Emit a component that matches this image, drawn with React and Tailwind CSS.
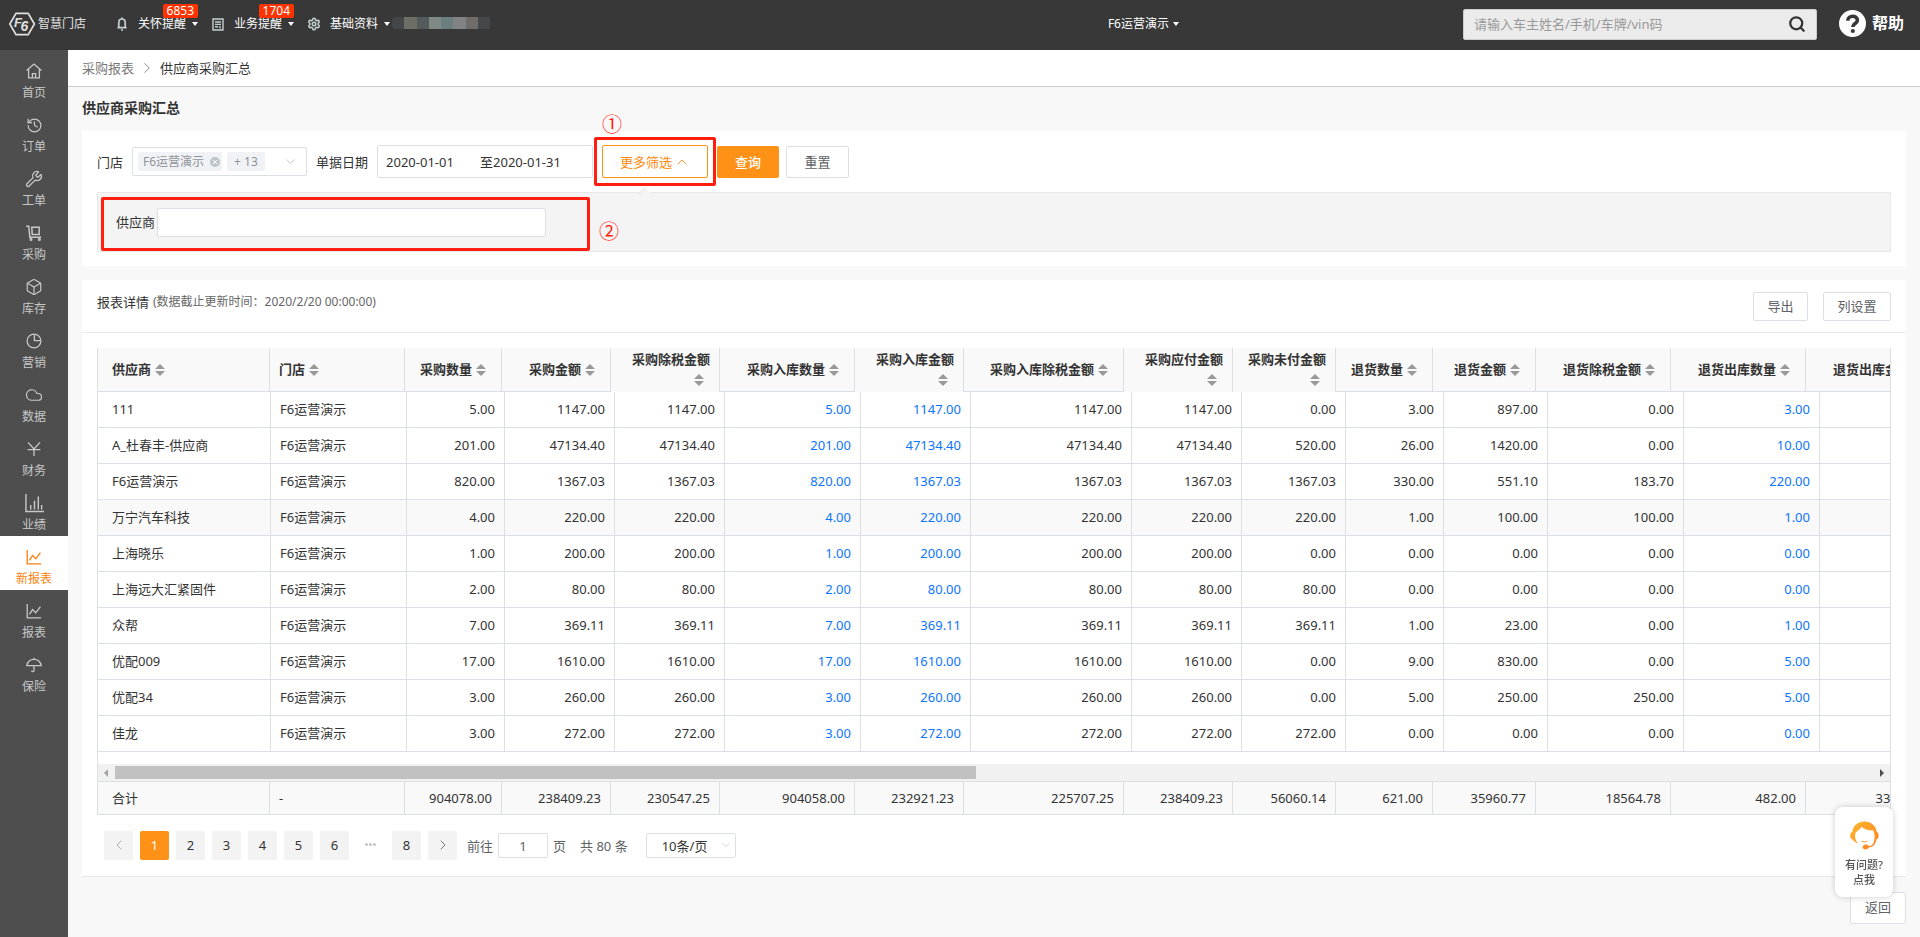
import React, { useState } from "react";
import { Box, ChevronDown, ChevronLeft, ChevronRight, ChevronUp, Cloud, History, Search, Settings, Wrench } from "lucide-react";

const FONT = "font-['Noto_Sans','Noto_Sans_CJK_SC',sans-serif]";

const Svg = ({ children, size = 16 }) => (
  <svg
    width={size}
    height={size}
    viewBox="0 0 16 16"
    fill="none"
    stroke="currentColor"
    strokeWidth="1.3"
    aria-hidden="true"
  >
    {children}
  </svg>
);

const HomeIcon = () => (
  <Svg>
    <path d="M0.6 7.6 8 1l7.4 6.6M2.6 6.4v8.4h10.8V6.4" />
    <path d="M6.4 14.8v-4.2h3.2v4.2" />
  </Svg>
);
const CartIcon = () => (
  <Svg>
    <path d="M0.2 1.2h2.6l1 11h11.4M5.8 2.2h7.4v7.2H6.2z" strokeWidth="1.5" />
    <circle cx="5" cy="14.4" r="0.9" />
    <circle cx="13.4" cy="14.4" r="0.9" />
  </Svg>
);
const PieIcon = () => (
  <Svg>
    <circle cx="8" cy="8" r="6.9" />
    <path d="M8.4 1.4v6.2h6.2" />
  </Svg>
);
const YuanIcon = () => (
  <Svg>
    <path d="M2 1.4 8 8l6-6.6M8 8v7M1.6 8.6h12.8" />
  </Svg>
);
const BarsIcon = () => (
  <Svg size={19}>
    <path d="M0.8 0v14.8H16M4.8 13V9.2M8 13V5.6M11.2 13V2M14 13V9.2" strokeWidth="1.2" />
  </Svg>
);
const ChartIcon = () => (
  <Svg>
    <path d="M1.2 1v13.8H15M3.4 11.4 6.6 6.6l3.2 3.2 4.6-6.2" />
  </Svg>
);
const UmbrellaIcon = () => (
  <Svg>
    <path d="M0.8 8.6C1.6 4.6 4.4 2.4 8 2.4s6.4 2.2 7.2 6.2zM8 0.8v1.6M8 8.6v4.8c0 1.6-2.2 1.6-2.4 0.2" />
  </Svg>
);

const menu = [
  { label: "首页", icon: <HomeIcon /> },
  { label: "订单", icon: <History size={17} strokeWidth={1.7} /> },
  { label: "工单", icon: <Wrench size={18} strokeWidth={1.7} /> },
  { label: "采购", icon: <CartIcon /> },
  { label: "库存", icon: <Box size={18} strokeWidth={1.6} /> },
  { label: "营销", icon: <PieIcon /> },
  { label: "数据", icon: <Cloud size={18} strokeWidth={1.6} /> },
  { label: "财务", icon: <YuanIcon /> },
  { label: "业绩", icon: <BarsIcon /> },
  { label: "新报表", icon: <ChartIcon />, active: true },
  { label: "报表", icon: <ChartIcon /> },
  { label: "保险", icon: <UmbrellaIcon /> },
];

// wrap: the title does not fit beside its sort arrows
const columns = [
  { title: "供应商", width: 172 },
  { title: "门店", width: 135 },
  { title: "采购数量", width: 97 },
  { title: "采购金额", width: 109 },
  { title: "采购除税金额", width: 109, wrap: true },
  { title: "采购入库数量", width: 135, link: true },
  { title: "采购入库金额", width: 109, wrap: true, link: true },
  { title: "采购入库除税金额", width: 160 },
  { title: "采购应付金额", width: 109, wrap: true },
  { title: "采购未付金额", width: 103, wrap: true },
  { title: "退货数量", width: 97 },
  { title: "退货金额", width: 103 },
  { title: "退货除税金额", width: 135 },
  { title: "退货出库数量", width: 135, link: true },
  { title: "退货出库金额", width: 135, link: true },
];

const store = "F6运营演示";
const rows = [
  ["111", store, "5.00", "1147.00", "1147.00", "5.00", "1147.00", "1147.00", "1147.00", "0.00", "3.00", "897.00", "0.00", "3.00", ""],
  ["A_杜春丰-供应商", store, "201.00", "47134.40", "47134.40", "201.00", "47134.40", "47134.40", "47134.40", "520.00", "26.00", "1420.00", "0.00", "10.00", ""],
  ["F6运营演示", store, "820.00", "1367.03", "1367.03", "820.00", "1367.03", "1367.03", "1367.03", "1367.03", "330.00", "551.10", "183.70", "220.00", ""],
  ["万宁汽车科技", store, "4.00", "220.00", "220.00", "4.00", "220.00", "220.00", "220.00", "220.00", "1.00", "100.00", "100.00", "1.00", ""],
  ["上海晓乐", store, "1.00", "200.00", "200.00", "1.00", "200.00", "200.00", "200.00", "0.00", "0.00", "0.00", "0.00", "0.00", ""],
  ["上海远大汇紧固件", store, "2.00", "80.00", "80.00", "2.00", "80.00", "80.00", "80.00", "80.00", "0.00", "0.00", "0.00", "0.00", ""],
  ["众帮", store, "7.00", "369.11", "369.11", "7.00", "369.11", "369.11", "369.11", "369.11", "1.00", "23.00", "0.00", "1.00", ""],
  ["优配009", store, "17.00", "1610.00", "1610.00", "17.00", "1610.00", "1610.00", "1610.00", "0.00", "9.00", "830.00", "0.00", "5.00", ""],
  ["优配34", store, "3.00", "260.00", "260.00", "3.00", "260.00", "260.00", "260.00", "0.00", "5.00", "250.00", "250.00", "5.00", ""],
  ["佳龙", store, "3.00", "272.00", "272.00", "3.00", "272.00", "272.00", "272.00", "272.00", "0.00", "0.00", "0.00", "0.00", ""],
];
const totals = ["合计", "-", "904078.00", "238409.23", "230547.25", "904058.00", "232921.23", "225707.25", "238409.23", "56060.14", "621.00", "35960.77", "18564.78", "482.00", "33000.00"];

const Caret = () => (
  <span className="h-0 w-0 border-x-[3px] border-t-4 border-x-transparent border-t-current" />
);

const TopMenu = ({ icon, label, badge }) => (
  <button type="button" className="relative flex items-center text-[12px] leading-4">
    <span className="mr-2 flex w-4 justify-center text-[#c4d0d0]">{icon}</span>
    <span>{label}</span>
    <span className="ml-1.5 flex">
      <Caret />
    </span>
    {badge && (
      <span className="absolute -top-3 right-0 rounded-xs bg-[#ff3300] px-1 text-[12px] leading-3.5">
        {badge}
      </span>
    )}
  </button>
);

const TopBar = () => (
  <header className="flex h-[50px] items-center bg-[#383838] pb-3 pr-4 pl-2 text-white">
    <a href="#home" className="mt-2.5 flex items-center text-[#e0e0e0]">
      <svg width="28" height="24" viewBox="0 0 28 24" fill="none" stroke="currentColor" aria-hidden="true">
        <path d="M8 1.4h12.2L26.4 12l-6.2 10.6H8L1.8 12z" strokeWidth="1.7" />
        <g fontStyle="italic" fontWeight="700" fontFamily="Liberation Sans, sans-serif" fill="currentColor" stroke="none">
          <text x="6" y="15" fontSize="13">
            F
          </text>
          <text x="12.4" y="19.4" fontSize="14">
            6
          </text>
        </g>
      </svg>
      <span className="ml-0.5 text-[12px] leading-4">智慧门店</span>
    </a>
    <nav className="mt-2.5 ml-7 flex items-center gap-3">
      <TopMenu
        label="关怀提醒"
        badge="6853"
        icon={
          <svg width="10" height="14" viewBox="0 0 10 14" fill="none" stroke="currentColor" strokeWidth="1.7" aria-hidden="true">
            <path d="M1.8 10.200V5.600C1.800 3.400 3.200 2 5 2s3.200 1.400 3.200 3.600v4.600M0.400 10.600h9.200M4 13h2M5 0.400V2" />
          </svg>
        }
      />
      <TopMenu
        label="业务提醒"
        badge="1704"
        icon={
          <svg width="12" height="13" viewBox="0 0 12 13" fill="none" stroke="currentColor" strokeWidth="1.4" aria-hidden="true">
            <path d="M1 1h10v11H1zM3 4h6M3 6.4h6M3 8.8h3M8 8v2.4" />
          </svg>
        }
      />
      <TopMenu label="基础资料" icon={<Settings size={14} strokeWidth={2.6} />} />
    </nav>
    <div className="mt-2 ml-0.5 flex h-3 w-[98px] overflow-hidden rounded-l" aria-hidden="true">
      <span className="flex-1 bg-[#43474a]" />
      <span className="flex-1 bg-[#6d6f67]" />
      <span className="flex-1 bg-[#555b5c]" />
      <span className="flex-1 bg-[#7f8a87]" />
      <span className="flex-1 bg-[#6c7f80]" />
      <span className="flex-1 bg-[#808283]" />
      <span className="flex-1 bg-[#6f6c69]" />
      <span className="flex-1 bg-[#45484b]" />
    </div>
    <button type="button" className="mt-2.5 mr-[284px] ml-auto flex items-center gap-1 text-[12px] leading-4">
      F6运营演示
      <Caret />
    </button>
    <form className="mt-2.5 flex h-[31px] w-[354px] items-center rounded-xs border border-[#ccc] bg-[#ebebeb] px-2.5">
      <input
        type="text"
        aria-label="搜索"
        placeholder="请输入车主姓名/手机/车牌/vin码"
        className="min-w-0 flex-1 text-[13px] leading-5 text-[#333] outline-none placeholder:text-[#999]"
      />
      <button type="button" aria-label="查找" className="text-[#333]">
        <Search size={18} strokeWidth={3} />
      </button>
    </form>
    <a href="#help" className="mt-2 ml-[22px] flex items-center gap-1.5">
      <svg width="27" height="27" viewBox="0 0 27 27" aria-hidden="true">
        <circle cx="13.5" cy="13.5" r="13.5" fill="#fff" />
        <path d="M8.800 10.800c0-6 9.600-5.800 9.600-0.600 0 3.400-4.600 3.200-4.600 6.800" fill="none" stroke="#383838" strokeWidth="3.6" />
        <circle cx="13.8" cy="21" r="2.1" fill="#383838" />
      </svg>
      <span className="text-[16px] leading-6 font-bold">帮助</span>
    </a>
  </header>
);

const Sidebar = () => (
  <nav className="w-[68px] shrink-0 bg-[#4e4e4e] text-[#c8c8c8]">
    {menu.map((item) => (
      <a
        key={item.label}
        href={`#${item.label}`}
        className={`flex h-[54px] flex-col items-center pt-[11px] text-[12px] ${
          item.active ? "bg-white text-[#ff7f0e]" : ""
        }`}
      >
        <span className="flex h-5 items-center">{item.icon}</span>
        <span className="mt-1 leading-4">{item.label}</span>
      </a>
    ))}
  </nav>
);

const SortArrows = () => (
  <span className="inline-flex h-3 w-5 flex-col gap-0.5 pl-1 align-middle">
    <span className="h-0 w-0 border-x-5 border-b-5 border-x-transparent border-b-[#999]" />
    <span className="h-0 w-0 border-x-5 border-t-5 border-x-transparent border-t-[#999]" />
  </span>
);

// body columns are one pixel wider than those of the header and the totals
const Cols = ({ extra = 0 }) => (
  <colgroup>
    {columns.map((col) => (
      <col key={col.title} style={{ width: col.width + extra }} />
    ))}
  </colgroup>
);

const cellAlign = (i) => {
  if (i === 0) return "pl-3.5 pr-2.5 text-left";
  if (i === 1) return "px-[9px] text-left";
  return "px-[9px] text-right";
};

const ReportTable = () => (
  <div className="mx-[15px] mt-[15px] overflow-hidden border-x border-[#dcdfe6] text-[13px] leading-5 text-[#333]">
    <table className="w-[1843px] table-fixed border-separate border-spacing-0">
      <Cols />
      <thead>
        <tr className="h-11">
          {columns.map((col, i) => (
            <th
              key={col.title}
              className={`h-11 border-r border-[#dcdfe6] bg-[#f9f9f9] pb-0.5 font-bold ${
                col.wrap ? "" : "border-b"
              } ${cellAlign(i)}`}
            >
              {col.title}
              <SortArrows />
            </th>
          ))}
        </tr>
      </thead>
    </table>

    <table className="w-[1858px] table-fixed border-separate border-spacing-0">
      <Cols extra={1} />
      <tbody>
        {rows.map((row, r) => (
          <tr key={row[0]} className={r === 3 ? "bg-[#f9f9f9]" : "bg-white"}>
            {row.map((value, i) => (
              <td
                key={columns[i].title}
                className={`h-9 border-r border-b border-[#dcdfe6] pb-0.5 ${cellAlign(i)}`}
              >
                {columns[i].link && value ? (
                  <a href="#detail" className="text-[#0d74ff]">
                    {value}
                  </a>
                ) : (
                  value
                )}
              </td>
            ))}
          </tr>
        ))}
      </tbody>
    </table>

    {/* Horizontal scroll bar */}
    <div className="mt-3 flex h-[17px] items-center justify-between bg-[#f1f1f1] px-1.5">
      <span className="h-0 w-0 border-y-4 border-r-4 border-y-transparent border-r-[#a3a3a3]" />
      <span className="mx-[7px] h-full flex-1 py-0.5">
        <span className="block h-full w-[49%] bg-[#c1c1c1]" />
      </span>
      <span className="h-0 w-0 border-y-4 border-l-4 border-y-transparent border-l-[#505050]" />
    </div>

    <table className="w-[1843px] table-fixed border-separate border-spacing-0">
      <Cols />
      <tfoot>
        <tr>
          {totals.map((value, i) => (
            <td
              key={columns[i].title}
              className={`h-[34px] border-y border-r border-[#dcdfe6] bg-[#f9f9f9] ${cellAlign(i)}`}
            >
              {value}
            </td>
          ))}
        </tr>
      </tfoot>
    </table>
  </div>
);

const PageButton = ({ active, children, ...rest }) => (
  <button
    type="button"
    className={`flex h-[29px] w-[29px] items-center justify-center rounded-xs pb-0.5 ${
      active ? "bg-[#ff9117] text-white" : "bg-[#f3f3f3] text-[#333]"
    }`}
    {...rest}
  >
    {children}
  </button>
);

const Pagination = () => {
  const [page, setPage] = useState(1);

  return (
    <div className="flex items-center px-[22px] py-4 text-[13px] leading-5 text-[#606266]">
      <div className="flex gap-[7px]">
        <PageButton aria-label="上一页">
          <ChevronLeft size={16} strokeWidth={1.5} className="text-[#aaa]" />
        </PageButton>
        {[1, 2, 3, 4, 5, 6].map((n) => (
          <PageButton key={n} active={n === page} onClick={() => setPage(n)}>
            {n}
          </PageButton>
        ))}
        <span className="flex w-[29px] items-center justify-center gap-px pb-0.5">
          <span className="h-[3px] w-[3px] rounded-full bg-[#c4c4c4]" />
          <span className="h-[3px] w-[3px] rounded-full bg-[#c4c4c4]" />
          <span className="h-[3px] w-[3px] rounded-full bg-[#c4c4c4]" />
        </span>
        <PageButton onClick={() => setPage(8)}>8</PageButton>
        <PageButton aria-label="下一页">
          <ChevronRight size={16} strokeWidth={1.5} className="text-[#777]" />
        </PageButton>
      </div>
      <label className="ml-2.5 flex items-center gap-[5px]">
        前往
        <input
          type="text"
          defaultValue="1"
          className="h-[25px] w-[50px] rounded-xs border border-[#dcdfe6] text-center outline-none"
        />
        页
      </label>
      <span className="ml-3.5">共 80 条</span>
      <div className="relative ml-[18px]">
        <select
          aria-label="每页条数"
          className="h-[25px] w-[90px] appearance-none rounded-xs border border-[#dcdfe6] bg-white pl-[15px] text-[#333] outline-none"
        >
          <option>10条/页</option>
          <option>20条/页</option>
        </select>
        <ChevronDown size={12} strokeWidth={1.5} className="absolute top-1.5 right-1 text-[#c0c4cc]" />
      </div>
    </div>
  );
};

const Filters = () => (
  <section className="bg-white px-[15px] py-3.5 text-[13px] leading-5 text-[#333]">
    <div className="flex items-center gap-[9px]">
      <span id="store-label">门店</span>
      <div
        role="group"
        aria-labelledby="store-label"
        className="flex h-[29px] w-[175px] items-center gap-[5px] rounded-xs border border-[#dcdfe6] pr-2 pl-[5px] text-[12px] text-[#909399]"
      >
        <span className="flex h-[19px] items-center gap-1.5 rounded-xs bg-[#f0f2f5] pr-0.5 pl-[5px]">
          F6运营演示
          <button
            type="button"
            aria-label="移除"
            className="flex h-2.5 w-2.5 items-center justify-center rounded-full bg-[#c0c4cc]"
          >
            <svg width="6" height="6" viewBox="0 0 6 6" stroke="#fff" aria-hidden="true">
              <path d="M1 1l4 4M5 1 1 5" />
            </svg>
          </button>
        </span>
        <span className="flex h-[19px] items-center rounded-xs bg-[#f0f2f5] px-[7px]">+ 13</span>
        <button type="button" aria-label="展开" className="ml-auto">
          <ChevronDown size={15} strokeWidth={1.5} className="text-[#c0c4cc]" />
        </button>
      </div>
      <span>单据日期</span>
      <div className="flex h-[33px] w-[216px] items-center rounded-xs border border-[#dcdfe6] pl-2">
        <input
          type="text"
          aria-label="开始日期"
          defaultValue="2020-01-01"
          className="w-[94px] outline-none"
        />
        <span>至</span>
        <input
          type="text"
          aria-label="结束日期"
          defaultValue="2020-01-31"
          className="w-[94px] outline-none"
        />
      </div>
      <div className="relative z-10">
        <button
          type="button"
          className="flex h-[33px] w-[106px] items-center justify-center gap-0.5 rounded-xs border border-[#ff9117] bg-white text-[#ff8a0d]"
        >
          更多筛选
          <ChevronUp size={16} strokeWidth={1.3} />
        </button>
        <span className="pointer-events-none absolute -inset-2 rounded-xs border-3 border-[#ff1e10]" />
        <span className="absolute -top-8 left-0 text-[20px] leading-6 text-[#ff1e10]">①</span>
      </div>
      <div className="flex gap-[7px]">
        <button type="button" className="h-8 w-[62px] rounded-xs bg-[#ff9117] font-medium text-white">
          查询
        </button>
        <button type="button" className="h-8 w-[63px] rounded-xs border border-[#dcdfe6] bg-white text-[#606266]">
          重置
        </button>
      </div>
    </div>

    <div className="relative mt-3.5 flex h-[60px] items-center border border-[#e8e8e8] bg-[#f4f4f4] pl-[3px]">
      <span className="absolute -top-1 left-[542px] h-2.5 w-2.5 rotate-45 border-l border-[#e8e8e8] bg-[#f4f4f4]" />
      <div className="relative flex h-[54px] w-[489px] items-center self-end rounded-xs border-3 border-[#ff1e10] pb-1 pl-3">
        <label htmlFor="supplier">供应商</label>
        <input
          id="supplier"
          type="text"
          className="ml-0.5 h-[29px] w-[389px] rounded-xs border border-[#dcdfe6] bg-white px-2 outline-none"
        />
        <span className="absolute top-5 left-[495px] text-[20px] leading-6 text-[#ff1e10]">②</span>
      </div>
    </div>
  </section>
);

const ServiceWidget = () => (
  <button
    type="button"
    className="fixed right-[27px] bottom-10 flex h-[90px] w-[58px] flex-col items-center rounded-lg bg-white pt-3.5 text-[11px] leading-[15px] font-medium text-[#555] shadow-[0_0_6px_rgba(0,0,0,0.2)]"
  >
    <svg width="29" height="30" viewBox="0 0 29 30" className="mb-1.5 shrink-0" aria-hidden="true">
      <defs>
        <linearGradient id="hair" x1="0" y1="0" x2="1" y2="1">
          <stop offset="0" stopColor="#ffb931" />
          <stop offset="1" stopColor="#ff7d1a" />
        </linearGradient>
      </defs>
      <path
        d="M2.4 10.4C3.4 4.4 8.2 0.6 14.5 0.6s11.1 3.8 12.1 9.8c2.6 1.4 2.8 6.6-0.2 8.2-0.7 4.8-3.4 7.6-7.6 8-1 2.6-6.2 2.4-6.2-0.6 0-3 5-3.6 6.2-0.8 2.8-0.4 4.6-2 5.2-4.8C25 17 25 12.6 23 9.2c-4.4 0.6-9-0.8-11.4-3.4C9.8 8.8 7.2 9.6 5.4 12c-0.8 3.6-0.4 7 2.6 10.4C5.4 21.6 4 20.4 3 18.8-0.8 17.8-0.6 11.6 2.4 10.4z"
        fill="url(#hair)"
      />
      <path d="M11.6 20c1.6 1.2 4.2 1.2 5.8 0" fill="none" stroke="#ff9a20" strokeWidth="1" />
    </svg>
    <span>有问题?</span>
    <span>点我</span>
  </button>
);

const App = () => (
  <div className={`flex min-h-screen flex-col bg-[#f8f8f8] ${FONT}`}>
    <TopBar />
    <div className="flex flex-1">
      <Sidebar />
      <main className="min-w-0 flex-1">
        <nav className="flex h-[37px] items-center gap-1 border-b border-[#ccc] bg-white px-3.5 text-[13px] leading-5">
          <a href="#reports" className="text-[#777]">
            采购报表
          </a>
          <ChevronRight size={18} strokeWidth={1.3} className="text-[#888]" />
          <span className="text-[#333]">供应商采购汇总</span>
        </nav>

        <div className="px-3.5">
          <h1 className="h-11 text-[14px] leading-[42px] font-bold text-[#333]">供应商采购汇总</h1>

          <Filters />

          <section className="mt-3.5 border-b border-[#e8e8e8] bg-white">
            <div className="flex h-[53px] items-center border-b border-[#e8e8e8] px-[15px] text-[13px] leading-5">
              <h2 className="mb-2 text-[#333]">报表详情</h2>
              <span className="mb-2 ml-1 text-[12px] text-[#666]">
                (数据截止更新时间：2020/2/20 00:00:00)
              </span>
              <button
                type="button"
                className="ml-auto h-[29px] w-[55px] rounded-xs border border-[#dcdfe6] text-[#606266]"
              >
                导出
              </button>
              <button
                type="button"
                className="ml-[15px] h-[29px] w-[68px] rounded-xs border border-[#dcdfe6] text-[#606266]"
              >
                列设置
              </button>
            </div>

            <ReportTable />
            <Pagination />
          </section>

          <div className="mt-[15px] flex justify-end">
            <button
              type="button"
              className="h-8 w-14 rounded-xs border border-[#dcdfe6] bg-white text-[13px] text-[#606266]"
            >
              返回
            </button>
          </div>
        </div>
      </main>
    </div>
    <ServiceWidget />
  </div>
);

export default App;
